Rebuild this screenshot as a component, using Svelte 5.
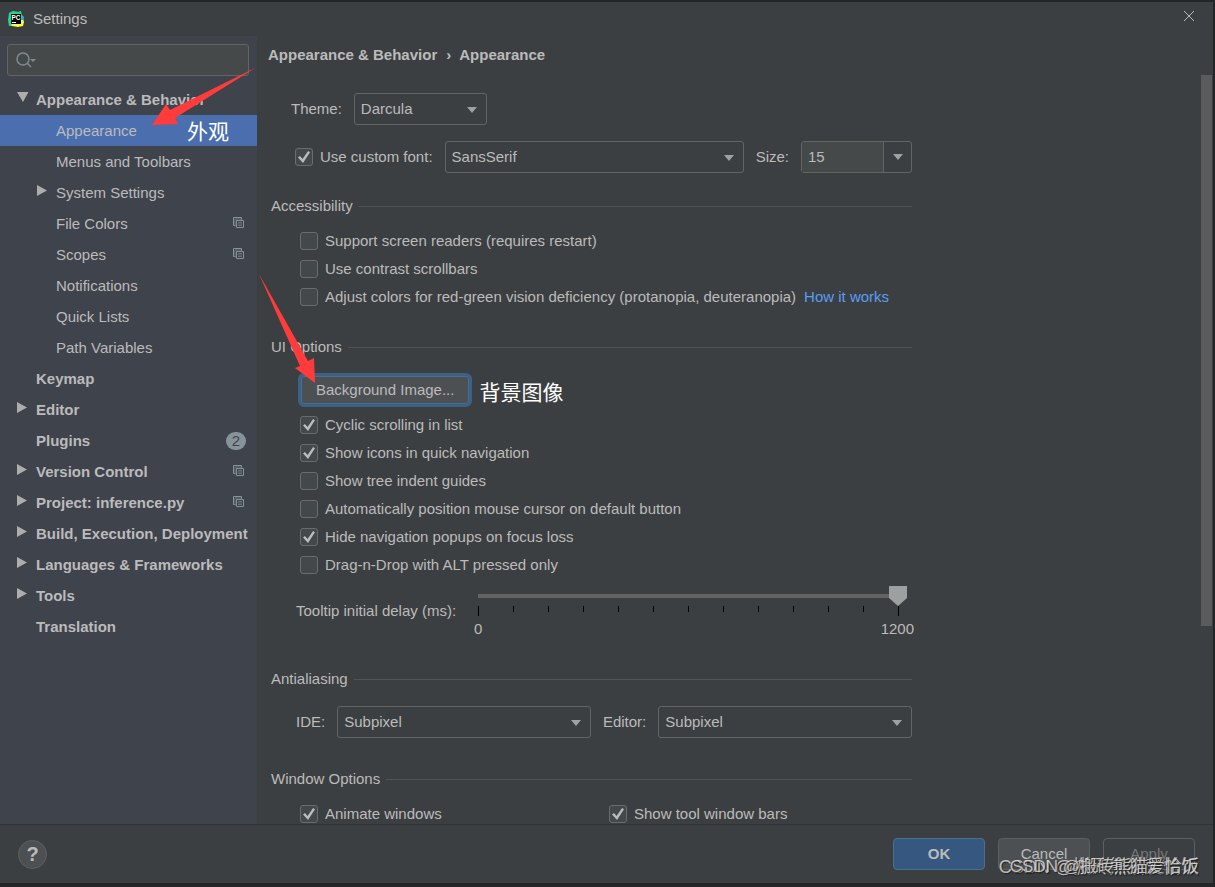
<script>
  const tree = [
    { label: 'Appearance & Behavior', top: true, arrow: 'down' },
    { label: 'Appearance', selected: true, note: '外观' },
    { label: 'Menus and Toolbars' },
    { label: 'System Settings', arrow: 'right' },
    { label: 'File Colors', copy: true },
    { label: 'Scopes', copy: true },
    { label: 'Notifications' },
    { label: 'Quick Lists' },
    { label: 'Path Variables' },
    { label: 'Keymap', top: true },
    { label: 'Editor', top: true, arrow: 'right' },
    { label: 'Plugins', top: true, badge: 2 },
    { label: 'Version Control', top: true, arrow: 'right', copy: true },
    { label: 'Project: inference.py', top: true, arrow: 'right', copy: true },
    { label: 'Build, Execution, Deployment', top: true, arrow: 'right' },
    { label: 'Languages & Frameworks', top: true, arrow: 'right' },
    { label: 'Tools', top: true, arrow: 'right' },
    { label: 'Translation', top: true },
  ];

  let accessibility = $state([
    { label: 'Support screen readers (requires restart)', checked: false },
    { label: 'Use contrast scrollbars', checked: false },
    {
      label: 'Adjust colors for red-green vision deficiency (protanopia, deuteranopia)',
      checked: false,
      link: 'How it works',
    },
  ]);

  let uiOptions = $state([
    { label: 'Cyclic scrolling in list', checked: true },
    { label: 'Show icons in quick navigation', checked: true },
    { label: 'Show tree indent guides', checked: false },
    { label: 'Automatically position mouse cursor on default button', checked: false },
    { label: 'Hide navigation popups on focus loss', checked: true },
    { label: 'Drag-n-Drop with ALT pressed only', checked: false },
  ]);

  let windowOptions = $state([
    { label: 'Animate windows', checked: true },
    { label: 'Show tool window bars', checked: true },
  ]);

  let customFont = $state(true);
  let fontSize = $state('15');
  let delay = $state(1200);

  const ticks = Array.from({ length: 13 }, (_, i) => i);
</script>

<div class="dialog">
  <header class="titlebar">
    <svg class="logo" viewBox="0 0 16 16" width="16" height="16" aria-hidden="true">
      <path d="M1 2 5 0 11 1 10 6 4 15 1 15 0 9Z" fill="#21d789" />
      <path d="M10 1 13 0 14 5 15 8 11 6Z" fill="#21d789" />
      <path d="M13 6 15 7 16 11 15 15 10 16 4 15 3 12 12 12Z" fill="#fcf84a" />
      <path d="M14 4 16 6 15 9 12 9Z" fill="#07c3f2" />
      <rect x="3" y="3" width="10" height="10" fill="#000" />
      <text x="3.500" y="8.500" font-size="6.500" font-weight="700" fill="#fff">PC</text>
      <rect x="4" y="11" width="4" height="1" fill="#fff" />
    </svg>
    <h1>Settings</h1>
    <button class="close" aria-label="Close">
      <svg viewBox="0 0 10 10" width="10" height="10"><path d="M0 0 10 10M10 0 0 10" /></svg>
    </button>
  </header>

  <div class="main">
    <aside class="sidebar">
      <label class="search">
        <svg viewBox="0 0 20 16" width="20" height="16" aria-hidden="true">
          <circle cx="7" cy="7" r="6" />
          <path d="M11 11 15 15" />
          <path class="caret" d="M14 7H20L17 10Z" />
        </svg>
        <input type="text" aria-label="Search settings" />
      </label>
      <nav>
        <ul class="tree">
          {#each tree as item}
            <li>
              <a href="#top" class="item" class:top={item.top} class:selected={item.selected}>
                <span class="arrow">
                  {#if item.arrow === 'down'}
                    <svg viewBox="0 0 12 12" width="12" height="12"><path d="M0 0H11.500L6 10Z" /></svg>
                  {:else if item.arrow === 'right'}
                    <svg viewBox="0 0 12 12" width="12" height="12"><path d="M0 0 10 5.500 0 11Z" /></svg>
                  {/if}
                </span>
                <span class="name">{item.label}</span>
                {#if item.copy}
                  <svg class="copy" viewBox="0 0 11 11" width="11" height="11" aria-hidden="true">
                    <path d="M2.500 8.500H.5V.5H8.500V2.500M3.500 10.500V3.500H10.500V10.500Z" />
                    <path d="M2 9V2H9M5 5.500H9M5 7H9M5 8.500H9" class="faint" />
                  </svg>
                {/if}
                {#if item.badge}
                  <span class="badge">{item.badge}</span>
                {/if}
                {#if item.note}
                  <span class="note over">{item.note}</span>
                {/if}
              </a>
            </li>
          {/each}
        </ul>
      </nav>
    </aside>

    <main class="content">
      <h2 class="breadcrumb">
        <span>Appearance &amp; Behavior</span><span class="sep">›</span><span>Appearance</span>
      </h2>

      <div class="scroller">
        <form class="form">
          <div class="row theme">
            <label for="theme">Theme:</label>
            <span class="select">
              <select id="theme"><option>Darcula</option></select>
            </span>
          </div>

          <div class="row font">
            <label class="check">
              <input type="checkbox" bind:checked={customFont} />Use custom font:
            </label>
            <span class="select grow">
              <select aria-label="Font"><option>SansSerif</option></select>
            </span>
            <label for="size">Size:</label>
            <span class="combo">
              <input id="size" type="text" bind:value={fontSize} />
              <button type="button" aria-label="Choose size"></button>
            </span>
          </div>

          <section>
            <h3>Accessibility</h3>
            <div class="checks">
              {#each accessibility as option}
                <div class="check-row">
                  <label class="check">
                    <input type="checkbox" bind:checked={option.checked} />{option.label}
                  </label>
                  {#if option.link}
                    <a class="link" href="#top">{option.link}</a>
                  {/if}
                </div>
              {/each}
            </div>
          </section>

          <section>
            <h3>UI Options</h3>
            <div class="background">
              <button type="button" class="focused">Background Image...</button>
              <span class="note">背景图像</span>
            </div>
            <div class="checks tight">
              {#each uiOptions as option}
                <div class="check-row">
                  <label class="check">
                    <input type="checkbox" bind:checked={option.checked} />{option.label}
                  </label>
                </div>
              {/each}
            </div>
            <div class="delay">
              <label for="delay">Tooltip initial delay (ms):</label>
              <div class="slider">
                <input id="delay" type="range" min="0" max="1200" bind:value={delay} />
                <div class="ticks">
                  {#each ticks as tick}
                    <i class:major={tick % 12 === 0}></i>
                  {/each}
                </div>
                <div class="scale"><span>0</span><span>1200</span></div>
              </div>
            </div>
          </section>

          <section>
            <h3>Antialiasing</h3>
            <div class="antialiasing">
              <div class="row">
                <label for="ide">IDE:</label>
                <span class="select grow">
                  <select id="ide"><option>Subpixel</option></select>
                </span>
                <label for="editor">Editor:</label>
                <span class="select grow">
                  <select id="editor"><option>Subpixel</option></select>
                </span>
              </div>
            </div>
          </section>

          <section>
            <h3>Window Options</h3>
            <div class="checks columns">
              {#each windowOptions as option}
                <div class="check-row">
                  <label class="check">
                    <input type="checkbox" bind:checked={option.checked} />{option.label}
                  </label>
                </div>
              {/each}
            </div>
          </section>
        </form>
        <div class="scrollbar"><div class="thumb"></div></div>
      </div>
    </main>
  </div>

  <footer class="footer">
    <button class="help" aria-label="Help">?</button>
    <div class="actions">
      <button class="ok">OK</button>
      <button>Cancel</button>
      <button class="apply" disabled>Apply</button>
    </div>
  </footer>

  <svg class="pointers" aria-hidden="true">
    <path d="M257 67 170 110 166 104 152 125 178 124 175 118Z" />
    <path d="M259 274 300 366 295 368 315 383 314 358 308 361Z" />
  </svg>
  <span class="watermark">CSDN @搬砖熊猫爱恰饭</span>
  <span class="watermark small">CSDN @搬砖熊猫爱恰饭</span>
</div>

<style>
  :global(body) {
    background: #1e1e1f;
  }
  .dialog {
    position: relative;
    display: flex;
    flex-direction: column;
    height: 100vh;
    box-sizing: border-box;
    border: solid #242526;
    border-width: 2px 2px 4px 0;
    overflow: hidden;
    background: #3c3f41;
    color: #bbb;
    font: 15px/20px 'Liberation Sans', 'Noto Sans CJK SC', sans-serif;
  }
  button,
  input,
  select {
    box-sizing: border-box;
    margin: 0;
    font: inherit;
    color: inherit;
    outline: none;
  }
  h1,
  h2,
  h3 {
    margin: 0;
    font-size: 15px;
    font-weight: normal;
  }

  .titlebar {
    display: flex;
    align-items: center;
    gap: 9px;
    height: 34px;
    flex: none;
    padding: 0 19px 0 8px;
  }
  .close {
    display: flex;
    margin: 0 0 6px auto;
    padding: 0;
    border: 0;
    background: none;
  }
  .close path {
    stroke: #bbb;
  }

  .main {
    display: flex;
    flex: 1;
    min-height: 0;
  }
  .sidebar {
    width: 257px;
    flex: none;
    background: #3f434c;
  }
  .search {
    display: flex;
    align-items: center;
    height: 32px;
    box-sizing: border-box;
    margin: 8px 8px 8px 7px;
    padding: 0 8px;
    border: 1px solid #646464;
    border-radius: 3px;
    background: #45494a;
  }
  .search svg {
    flex: none;
    fill: none;
    stroke: #7f8b91;
    stroke-width: 1.500;
  }
  .search .caret {
    fill: #7f8b91;
    stroke: none;
  }
  .search input {
    flex: 1;
    min-width: 0;
    border: 0;
    background: none;
  }

  .tree {
    margin: 0;
    padding: 0;
    list-style: none;
  }
  .item {
    position: relative;
    display: flex;
    align-items: center;
    height: 31px;
    padding: 0 11px 0 37px;
    color: inherit;
    text-decoration: none;
    white-space: nowrap;
  }
  .item.top {
    padding-left: 17px;
    font-weight: bold;
  }
  .selected {
    background: #4b6eaf;
  }
  .arrow {
    width: 19px;
    height: 16px;
    flex: none;
  }
  .arrow svg {
    display: block;
    fill: #adadad;
  }
  .name {
    flex: 1;
  }
  .copy {
    margin: 0 2px 2px 0;
    fill: none;
    stroke: #87939a;
  }
  .copy .faint {
    stroke-opacity: 0.6;
  }
  .badge {
    width: 20px;
    height: 18px;
    border-radius: 9px;
    background: #87939a;
    color: #3f434c;
    font-weight: normal;
    line-height: 18px;
    text-align: center;
  }
  .note {
    color: #fff;
    font-size: 21px;
    line-height: 28px;
  }
  .note.over {
    position: absolute;
    top: 3px;
    right: 28px;
  }

  .content {
    display: flex;
    flex: 1;
    flex-direction: column;
    min-width: 0;
  }
  .breadcrumb {
    height: 39px;
    flex: none;
    padding-left: 11px;
    font-weight: bold;
    line-height: 38px;
  }
  .sep {
    margin: 0 8px 0 9px;
  }
  .scroller {
    display: flex;
    flex: 1;
    justify-content: space-between;
    min-height: 0;
    overflow: hidden;
    padding: 0 1px 0 14px;
  }
  .scrollbar {
    width: 11px;
  }
  .thumb {
    height: 551px;
    background: #5a5b5c;
  }

  .form {
    flex: 1;
    max-width: 641px;
    padding-top: 18px;
  }
  .row {
    display: flex;
    align-items: center;
    height: 32px;
    gap: 12px;
  }
  .theme {
    margin-bottom: 16px;
    padding-left: 20px;
  }
  .font {
    padding-left: 24px;
  }
  .antialiasing {
    padding: 17px 0 8px 25px;
  }

  .select {
    position: relative;
    display: flex;
    min-width: 133px;
    height: 32px;
  }
  .grow {
    flex: 1;
  }
  .select select {
    width: 100%;
    padding: 0 6px;
    appearance: none;
    border: 1px solid #646464;
    border-radius: 3px;
    background: #3c3f41;
  }
  .select::after,
  .combo button::after {
    content: '';
    border: solid transparent;
    border-width: 6px 5px 0;
    border-top-color: #9da1a4;
  }
  .select::after {
    position: absolute;
    top: 14px;
    right: 10px;
    pointer-events: none;
  }
  .combo {
    display: flex;
    width: 111px;
    height: 32px;
    box-sizing: border-box;
    border: 1px solid #646464;
    border-radius: 3px;
  }
  .combo input {
    width: 82px;
    padding: 0 6px;
    border: 0;
    border-right: 1px solid #646464;
    background: #45494a;
  }
  .combo button {
    display: flex;
    flex: 1;
    align-items: center;
    justify-content: center;
    padding: 0;
    border: 0;
    background: none;
  }

  section {
    margin-top: 23px;
  }
  h3 {
    display: flex;
    align-items: center;
    gap: 6px;
  }
  h3::after {
    content: '';
    flex: 1;
    height: 1px;
    background: #515354;
  }
  .checks {
    padding: 11px 0 3px 29px;
  }
  .checks.tight {
    padding: 4px 0 7px 29px;
  }
  .columns {
    display: grid;
    grid-template-columns: 1fr 1fr;
    column-gap: 6px;
  }
  .check-row {
    display: flex;
    align-items: center;
    gap: 8px;
    height: 28px;
    white-space: nowrap;
  }
  .check {
    display: flex;
    align-items: center;
    gap: 7px;
  }
  .check input {
    display: grid;
    place-items: center;
    width: 18px;
    height: 18px;
    appearance: none;
    border: 1px solid #6b6b6b;
    border-radius: 3px;
    background: #43494a;
  }
  .check input:checked::before {
    content: '';
    width: 12px;
    height: 12px;
    background: #bbb;
    clip-path: polygon(0 55%, 16% 42%, 38% 66%, 84% 0, 100% 10%, 42% 100%);
  }
  .link {
    color: #589df6;
    text-decoration: none;
  }

  .background {
    display: flex;
    align-items: center;
    gap: 7px;
    height: 34px;
    margin: 16px 0 0 27px;
  }
  .focused {
    height: 34px;
    padding: 0 15px;
    border: 3px solid #3d6185;
    border-radius: 6px;
    background: #4c5052;
    box-shadow: inset 0 0 0 1px #466d94;
  }
  .background .note {
    padding-top: 5px;
  }

  .delay {
    display: flex;
    align-items: center;
    gap: 13px;
    padding: 0 5px 7px 25px;
  }
  .delay label {
    padding-bottom: 4px;
  }
  .slider {
    flex: 1;
  }
  .slider input {
    display: block;
    width: 100%;
    height: 20px;
    appearance: none;
    background: linear-gradient(#646464, #646464) center / calc(100% - 18px) 4px no-repeat;
  }
  .slider input::-webkit-slider-thumb {
    width: 18px;
    height: 20px;
    appearance: none;
    background: #9da0a1;
    clip-path: polygon(0 0, 100% 0, 100% 60%, 50% 100%, 0 60%);
  }
  .ticks {
    display: flex;
    justify-content: space-between;
    height: 10px;
    margin: 0 8px 0 9px;
  }
  .ticks i {
    width: 1px;
    height: 6px;
    background: #000;
  }
  .ticks .major {
    height: 10px;
  }
  .scale {
    display: flex;
    justify-content: space-between;
    margin: 3px -7px 0 5px;
  }

  .footer {
    display: flex;
    align-items: center;
    justify-content: space-between;
    height: 59px;
    flex: none;
    box-sizing: border-box;
    padding: 0 18px;
    border-top: 1px solid #313335;
  }
  .help {
    width: 29px;
    height: 29px;
    padding: 0;
    border: 1px solid #5e6060;
    border-radius: 50%;
    background: #4c5052;
    font-size: 20px;
    font-weight: bold;
  }
  .actions {
    display: flex;
    gap: 13px;
  }
  .actions button {
    width: 92px;
    height: 32px;
    border: 1px solid #5e6060;
    border-radius: 4px;
    background: #4c5052;
  }
  .actions .ok {
    border-color: #4c708c;
    background: #365880;
    font-weight: bold;
  }
  .actions .apply {
    background: none;
    color: #777;
  }

  /* hand-drawn marks laid over the dialog */
  .pointers {
    position: absolute;
    top: -2px;
    left: 0;
    width: 100%;
    height: 100%;
    fill: #ff3b3b;
    pointer-events: none;
  }
  .watermark {
    position: absolute;
    right: 14px;
    bottom: 4px;
    color: rgba(225, 225, 225, 0.8);
    font-size: 18px;
    line-height: 24px;
    text-shadow: 1px 1px 1px #222;
    white-space: nowrap;
    pointer-events: none;
  }
  .watermark.small {
    font-size: 17px;
  }
</style>
